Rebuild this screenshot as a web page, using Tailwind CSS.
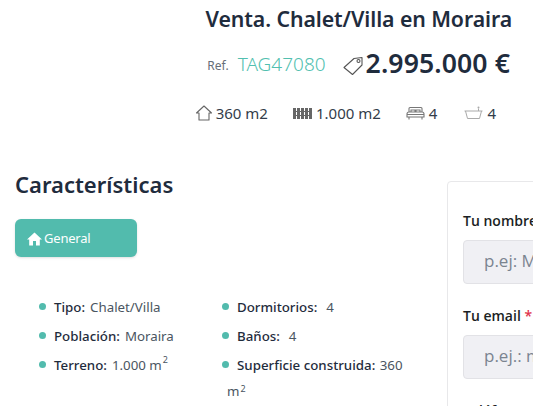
<!DOCTYPE html>
<html lang="es">
<head>
  <meta charset="UTF-8" />
  <title>Venta. Chalet/Villa en Moraira</title>
  <script src="https://cdn.jsdelivr.net/npm/@tailwindcss/browser@4"></script>
</head>
<body class="bg-white w-[533px] h-[406px] overflow-hidden font-['Noto_Sans',sans-serif] text-[#1f2c3d]">
  <header class="flex flex-col items-end pr-[21px] pt-[4px] h-[170px]">
    <h1 class="text-[21.3px] leading-[30px] font-semibold tracking-[-0.1px]">Venta. Chalet/Villa en Moraira</h1>
    <div class="flex items-center mt-[14px] h-[32px] pr-[2px]">
      <span class="text-[12px] text-[#666e78] mr-[9px] mt-[3px]">Ref.</span>
      <span class="text-[19px] text-[#52bfb0] mr-[16px] font-light">TAG47080</span>
      <svg class="w-[22px] h-[22px] mr-[2px] mt-[2px]" viewBox="0 0 22 22" fill="none" stroke="#555" stroke-width="1.1">
        <path d="M2 13.500 12 4.500 20 3.500 20 11 10.500 20.500Z" stroke-linejoin="round" />
        <circle cx="16.500" cy="7" r="1.500" />
      </svg>
      <span class="text-[26.6px] font-semibold tracking-[0.1px]">2.995.000 €</span>
    </div>
    <div class="flex items-center mt-[21px] h-[24px] text-[15px] pr-[16px] text-[#333d4a]">
      <svg class="w-[18px] h-[18px] mr-[3px]" viewBox="0 0 18 18" fill="none" stroke="#666" stroke-width="1.1" stroke-linejoin="round">
        <path d="M1.500 9 9 2l7.500 7H14v7H4V9Z" />
      </svg>
      <span class="mr-[25px]">360 m2</span>
      <svg class="w-[19px] h-[12px] mr-[4px]" viewBox="0 0 19 12" fill="#666">
        <path d="M0 1h3v11H0zM4 1h3v11H4zM8 1h3v11H8zM12 1h3v11h-3zM16 1h3v11h-3z" />
        <path d="M3 4h1v1H3zM7 4h1v1H7zM11 4h1v1h-1zM15 4h1v1h-1zM3 8h1v1H3zM7 8h1v1H7zM11 8h1v1h-1zM15 8h1v1h-1z" />
      </svg>
      <span class="mr-[25px]">1.000 m2</span>
      <svg class="w-[19px] h-[15px] mr-[4px]" viewBox="0 0 19 15" fill="none" stroke="#777" stroke-width="1.100">
        <path d="M3 6V2.500Q3 1.500 4 1.500h11q1 0 1 1V6M1 11V8q0-2 2-2h13q2 0 2 2v3ZM1 8.500h17M3 11v2.500M16 11v2.500M5 6V4h4v2M10 6V4h4v2" />
      </svg>
      <span class="mr-[27px]">4</span>
      <svg class="w-[19px] h-[15px] mr-[4px]" viewBox="0 0 19 15" fill="none" stroke="#aaa" stroke-width="1">
        <path d="M.5 5h18M1.500 5l2 7.500h12l2-7.500M14.500 5V2.500" />
        <circle cx="14.500" cy="1.500" r="1" fill="#aaa" stroke="none" />
      </svg>
      <span>4</span>
    </div>
  </header>

  <div class="flex pl-[15px]">
    <main class="w-[432px] shrink-0">
      <h2 class="text-[22px] leading-[28px] font-semibold">Características</h2>
      <button class="mt-[21px] flex items-center gap-[2px] w-[122px] h-[38px] pl-[12px] pt-[1px] rounded-[6px] bg-[#52bbad] shadow-sm text-white text-[13px] tracking-[-0.2px]">
        <svg class="w-[15px] h-[14px]" viewBox="0 0 15 14" fill="#fff">
          <path d="M7.500 .5 0 7.500h2.200V13.500h3.800V9h3v4.500h3.800V7.500H15Z" />
        </svg>
        General
      </button>
      <div class="grid grid-cols-[183px_197px] mt-[36px] pl-[24px] text-[13.3px] text-[#4a5561]">
        <ul class="flex flex-col">
          <li class="h-[29px] leading-[29px] flex items-center">
            <span class="w-[7px] h-[7px] rounded-full bg-[#52bbad] mr-[8px] -mt-[2px]"></span>
            <b class="font-medium text-[#1f2c3d] mr-[5px]">Tipo:</b>Chalet/Villa
          </li>
          <li class="h-[29px] leading-[29px] flex items-center">
            <span class="w-[7px] h-[7px] rounded-full bg-[#52bbad] mr-[8px] -mt-[2px]"></span>
            <b class="font-medium text-[#1f2c3d] mr-[5px]">Población:</b>Moraira
          </li>
          <li class="h-[29px] leading-[29px] flex items-center">
            <span class="w-[7px] h-[7px] rounded-full bg-[#52bbad] mr-[8px] -mt-[2px]"></span>
            <b class="font-medium text-[#1f2c3d] mr-[5px]">Terreno:</b>1.000 m<sup class="text-[9px] ml-[1px] -mt-[2px]">2</sup>
          </li>
        </ul>
        <ul class="flex flex-col">
          <li class="h-[29px] leading-[29px] flex items-center">
            <span class="w-[7px] h-[7px] rounded-full bg-[#52bbad] mr-[8px] -mt-[2px]"></span>
            <b class="font-medium text-[#1f2c3d] mr-[9px]">Dormitorios:</b>4
          </li>
          <li class="h-[29px] leading-[29px] flex items-center">
            <span class="w-[7px] h-[7px] rounded-full bg-[#52bbad] mr-[8px] -mt-[2px]"></span>
            <b class="font-medium text-[#1f2c3d] mr-[9px]">Baños:</b>4
          </li>
          <li class="leading-[26px] mt-[1px] pl-[5px] -indent-[5px]">
            <span class="inline-block w-[7px] h-[7px] rounded-full bg-[#52bbad] mr-[8px] align-[2px]"></span><b class="font-medium text-[#1f2c3d] mr-[1px]">Superficie construida:</b> 360 m<sup class="text-[9px] ml-[1px]">2</sup>
          </li>
        </ul>
      </div>
    </main>

    <aside class="w-[320px] shrink-0 h-[300px] mt-[11px] border border-[#e8e8ea] rounded-[4px] px-[15px] pt-[29px] font-['Open_Sans',sans-serif] text-[#1b1f24]">
      <label class="block text-[14px] leading-[20px] font-semibold">Tu nombre</label>
      <div class="mt-[9px] h-[44px] rounded-[4px] bg-[#f0f0f4] border border-[#e2e2e6] pl-[20px] text-[17px] leading-[40px] text-[#7b8490]">p.ej: María García</div>
      <label class="block mt-[22px] text-[14px] leading-[20px] font-semibold">Tu email <span class="text-[#e0334c]">*</span></label>
      <div class="mt-[9px] h-[44px] rounded-[4px] bg-[#f0f0f4] border border-[#e2e2e6] pl-[20px] text-[17px] leading-[40px] text-[#7b8490]">p.ej.: maria@correo.es</div>
      <label class="block mt-[22px] text-[14px] leading-[20px] font-semibold">Teléfono</label>
    </aside>
  </div>
</body>
</html>
